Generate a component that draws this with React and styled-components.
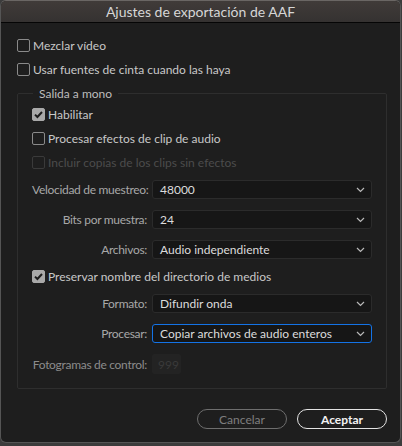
import React from "react";
import styled, { createGlobalStyle, css } from "styled-components";

const GlobalStyle = createGlobalStyle`
  html, body {
    margin: 0;
    padding: 0;
    background: #3c3c3c;
  }
  body {
    font-family: Lato, "Noto Sans", sans-serif;
    -webkit-font-smoothing: antialiased;
  }
`;

const Chevron = () => (
  <svg width="9" height="6" viewBox="0 0 9 6">
    <path d="M1 1l3.5 3.5L8 1" fill="none" stroke="#b8b8b8" strokeWidth="1.2" />
  </svg>
);

const Tick = () => (
  <svg width="11" height="11" viewBox="0 0 11 11">
    <path d="M2 5.6l2.4 2.4L9 3" fill="none" stroke="#1e1e1e" strokeWidth="2" />
  </svg>
);

const Check = ({ checked, disabled, children }) => (
  <CheckRow $disabled={disabled}>
    <Box $checked={checked} $disabled={disabled}>
      {checked && <Tick />}
    </Box>
    {children}
  </CheckRow>
);

const Field = ({ label, value, focused }) => (
  <FieldRow>
    <Label>{label}</Label>
    <Select $focused={focused}>
      <span>{value}</span>
      <Chevron />
    </Select>
  </FieldRow>
);

const App = () => (
  <>
    <GlobalStyle />
    <Window>
      <TitleBar>Ajustes de exportación de AAF</TitleBar>
      <Body>
        <Check>Mezclar vídeo</Check>
        <Check>Usar fuentes de cinta cuando las haya</Check>
        <Group>
          <Legend>Salida a mono</Legend>
          <Check checked>Habilitar</Check>
          <Check>Procesar efectos de clip de audio</Check>
          <Check disabled>Incluir copias de los clips sin efectos</Check>
          <Fields>
            <Field label="Velocidad de muestreo:" value="48000" />
            <Field label="Bits por muestra:" value="24" />
            <Field label="Archivos:" value="Audio independiente" />
          </Fields>
          <Check checked>Preservar nombre del directorio de medios</Check>
          <Fields $last>
            <Field label="Formato:" value="Difundir onda" />
            <Field label="Procesar:" value="Copiar archivos de audio enteros" focused />
            <FieldRow>
              <Label $disabled>Fotogramas de control:</Label>
              <NumberBox>999</NumberBox>
            </FieldRow>
          </Fields>
        </Group>
        <Buttons>
          <Button>Cancelar</Button>
          <Button $primary>Aceptar</Button>
        </Buttons>
      </Body>
    </Window>
  </>
);

export default App;

const Window = styled.div`
  width: 401px;
  height: 443px;
  background: #1e1e1e;
  border: 1px solid #555;
  border-top-color: #6a6664;
  border-radius: 6px;
  box-sizing: border-box;
  overflow: hidden;
  display: flex;
  flex-direction: column;
`;

const TitleBar = styled.div`
  height: 21px;
  flex: none;
  display: flex;
  align-items: center;
  justify-content: center;
  background: linear-gradient(#403b39, #353231);
  border-bottom: 1px solid #050505;
  color: #d6d6d6;
  font-size: 14px;
`;

const Body = styled.div`
  flex: 1;
  display: flex;
  flex-direction: column;
  padding: 15px 13px 0 16px;
`;

const CheckRow = styled.label`
  display: flex;
  align-items: center;
  gap: 3px;
  height: 14px;
  margin-bottom: 10px;
  font-size: 12px;
  color: ${(p) => (p.$disabled ? "#4c4c4c" : "#c8c8c8")};
`;

const Box = styled.span`
  width: 11px;
  height: 11px;
  flex: none;
  border: 1.5px solid #8a8a8a;
  border-radius: 2px;
  display: flex;
  align-items: center;
  justify-content: center;
  ${(p) =>
    p.$checked &&
    css`
      background: #a9a9a9;
      border-color: #a9a9a9;
    `}
  ${(p) =>
    p.$disabled &&
    css`
      border-color: #3a3a3a;
    `}
`;

const Group = styled.fieldset`
  margin: 0;
  padding: 6px 14px 14px 14px;
  border: 1px solid #2e2e2e;
  border-radius: 2px;
  display: flex;
  flex-direction: column;
`;

const Legend = styled.legend`
  padding: 0 6px;
  margin-left: 1px;
  font-size: 12px;
  color: #bdbdbd;
`;

const Fields = styled.div`
  display: flex;
  flex-direction: column;
  gap: 11px;
  margin: 1px 0 ${(p) => (p.$last ? 0 : 10)}px;
`;

const FieldRow = styled.div`
  display: grid;
  grid-template-columns: 115px 1fr;
  column-gap: 5px;
  align-items: center;
`;

const Label = styled.span`
  text-align: right;
  font-size: 12px;
  letter-spacing: -0.3px;
  white-space: nowrap;
  color: ${(p) => (p.$disabled ? "#8c8c8c" : "#a8a8a8")};
`;

const Select = styled.div`
  height: 19px;
  box-sizing: border-box;
  display: flex;
  align-items: center;
  justify-content: space-between;
  padding: 0 6px 0 7px;
  background: #161616;
  border: 1px solid ${(p) => (p.$focused ? "#1473e6" : "#2b2b2b")};
  border-radius: 3px;
  color: #dcdcdc;
  font-size: 12px;
`;

const NumberBox = styled.div`
  width: 29px;
  height: 20px;
  box-sizing: border-box;
  padding-left: 6px;
  display: flex;
  align-items: center;
  background: #232323;
  border-radius: 2px;
  color: #3a3a3a;
  font-size: 12px;
`;

const Buttons = styled.div`
  display: flex;
  justify-content: flex-end;
  gap: 10px;
  margin-top: 20px;
`;

const Button = styled.button`
  width: 90px;
  height: 20px;
  padding: 0;
  border-radius: 10px;
  background: transparent;
  font-family: inherit;
  font-size: 12px;
  border: 1.5px solid ${(p) => (p.$primary ? "#e4e4e4" : "#6e6e6e")};
  color: ${(p) => (p.$primary ? "#f2f2f2" : "#7e7e7e")};
  font-weight: ${(p) => (p.$primary ? 700 : 400)};
`;
